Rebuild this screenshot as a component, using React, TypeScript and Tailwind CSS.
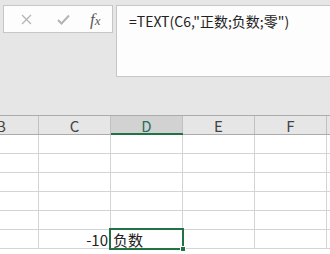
import React from "react";

const cols = [
  { label: "B", w: "w-[39px]", sel: false },
  { label: "C", w: "w-[72px]", sel: false },
  { label: "D", w: "w-[72px]", sel: true },
  { label: "E", w: "w-[72px]", sel: false },
  { label: "F", w: "w-[72px]", sel: false },
  { label: "", w: "w-[72px]", sel: false },
];

export default function App() {
  const font = { fontFamily: '"Noto Sans CJK SC", "Liberation Sans", sans-serif' };
  return (
    <div className="relative w-[330px] h-[254px] overflow-hidden bg-white" style={font}>
      {/* top formula area */}
      <div className="h-[115px] bg-[#e6e6e6] flex items-start pt-[5px] pl-[3px] gap-[3px]">
        <div className="w-[110px] h-[28px] shrink-0 bg-[#fdfdfd] border border-[#c6c6c6] flex items-center">
          <svg className="ml-[17px]" width="11" height="11" viewBox="0 0 11 11">
            <path d="M1 1 L10 10 M10 1 L1 10" stroke="#b4b4b4" strokeWidth="1.3" fill="none" />
          </svg>
          <svg className="ml-[25px]" width="13" height="11" viewBox="0 0 13 11">
            <path d="M1 6 L4.5 9.5 L12 1.5" stroke="#b4b4b4" strokeWidth="2" fill="none" />
          </svg>
          <span
            className="ml-[20px] text-[17px] italic text-[#5a5a5a] leading-none"
            style={{ fontFamily: '"Liberation Serif", serif' }}
          >
            f<span className="text-[13px]">x</span>
          </span>
        </div>
        <div className="flex-1 h-[72px] bg-[#fdfdfd] border border-[#c6c6c6] border-r-0 pl-[12px] pt-[5px] text-[14px] leading-[20px] text-[#222]">
          =TEXT(C6,"正数;负数;零")
        </div>
      </div>

      {/* header row */}
      <div className="flex h-[20px] bg-[#e6e6e6] border-t border-b border-[#ababab] box-border">
        {cols.map((c, i) => (
          <div
            key={i}
            className={`${c.w} shrink-0 h-full border-r border-[#c0c0c0] flex items-center text-[15px] leading-none ${
              i === 0 ? "justify-start" : "justify-center"
            } ${c.sel ? "bg-[#d2d2d2] text-[#2a6f5a] relative" : "text-[#444]"}`}
          >
            {c.label && <span className={i === 0 ? "-ml-[4px]" : ""}>{c.label}</span>}
            {c.sel && <div className="absolute left-0 right-[-1px] bottom-[-1px] h-[2px] bg-[#217346]" />}
          </div>
        ))}
      </div>

      {/* data rows */}
      {[0, 1, 2, 3, 4, 5].map((r) => (
        <div key={r} className="flex h-[19px] border-b border-[#d4d4d4] box-border">
          {cols.map((c, i) => (
            <div
              key={i}
              className={`${c.w} shrink-0 h-full border-r border-[#d4d4d4] flex items-center text-[15px] leading-none text-[#222] ${
                i === 1 ? "justify-end pr-[2px]" : "justify-start pl-[2px]"
              }`}
            >
              {r === 5 && i === 1 ? "-10" : r === 5 && i === 2 ? "负数" : ""}
            </div>
          ))}
        </div>
      ))}

      {/* selection overlay */}
      <div className="absolute left-[109px] top-[228px] w-[75px] h-[22px] border-2 border-[#217346]" />
      <div className="absolute left-[180px] top-[246px] w-[6px] h-[6px] bg-[#217346] border border-white" />
    </div>
  );
}
